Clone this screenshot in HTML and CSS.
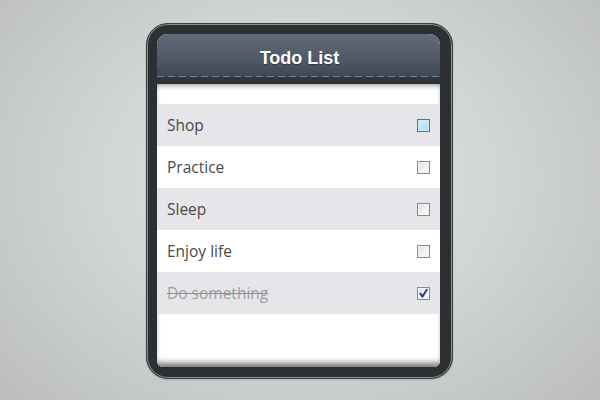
FILE: index.html
```html
<!DOCTYPE html>
<html>
<head>
<meta charset="utf-8">
<link rel="stylesheet" href="styles.css">
</head>
<body>
<div class="device">
  <div class="screen">
    <div class="header"><h1 class="title">Todo List</h1></div>
    <div class="content">
      <ul class="list">
        <li class="item alt"><span class="label">Shop</span><span class="box hover"></span></li>
        <li class="item"><span class="label">Practice</span><span class="box"></span></li>
        <li class="item alt"><span class="label">Sleep</span><span class="box"></span></li>
        <li class="item"><span class="label">Enjoy life</span><span class="box"></span></li>
        <li class="item alt done"><span class="label">Do something</span><span class="box checked"><svg class="tick" viewBox="0 0 11 11" width="11" height="11"><path d="M2.3 5.6 L4.4 8.6 L8.8 1.8" fill="none" stroke="#2b3b86" stroke-width="2" stroke-linecap="round" stroke-linejoin="round"/></svg></span></li>
      </ul>
    </div>
  </div>
</div>
</body>
</html>
```
FILE: styles.css
```css
html, body {
  margin: 0;
  padding: 0;
  height: 100%;
}
body {
  width: 600px;
  height: 400px;
  overflow: hidden;
  background: radial-gradient(ellipse 420px 330px at 50% 45%, #dfe4df 0%, #d3d7d4 45%, #b9bcbb 100%);
  display: flex;
  justify-content: center;
  align-items: flex-start;
}
.device {
  margin-top: 23px;
  margin-left: -1px;
  width: 307px;
  height: 356px;
  box-sizing: border-box;
  padding: 10px 12px 11px 10px;
  background: #2d3033;
  border: 1px solid #3d4043;
  border-radius: 22px;
  box-shadow: inset 0 0 0 1px #8a8e90, inset 0 0 0 2px #2d3033, 0 1px 2px rgba(0,0,0,0.15);
  display: flex;
}
.screen {
  flex: 1;
  display: flex;
  flex-direction: column;
  border-radius: 11px 11px 6px 6px;
  overflow: hidden;
  background: #fff;
}
.header {
  height: 50px;
  flex: none;
  position: relative;
  background: linear-gradient(#636a77 0%, #4f5664 55%, #3f4654 84%, #2f333a 88%, #2c3036 100%);
  display: flex;
  align-items: flex-start;
  justify-content: center;
  padding-left: 2px;
}
.header::after {
  content: "";
  position: absolute;
  left: 0;
  right: 0;
  top: 42px;
  height: 1px;
  background: repeating-linear-gradient(90deg, #71829a 0 7px, transparent 7px 11px);
}
.title {
  margin: 13px 0 0;
  font-family: "Liberation Sans", Arial, sans-serif;
  font-weight: bold;
  font-size: 18px;
  line-height: 22px;
  color: #fff;
  text-shadow: 0 1px 1px rgba(0,0,0,0.35);
}
.content {
  flex: 1;
  padding-top: 20px;
  background: #fff;
  box-shadow: inset 0 5px 5px -3px rgba(0,0,0,0.35), inset 0 -7px 6px -3px rgba(0,0,0,0.55);
}
.list {
  list-style: none;
  margin: 0;
  padding: 0;
}
.item {
  height: 42px;
  display: flex;
  align-items: center;
  justify-content: space-between;
  padding: 0 10px 0 10px;
  background: #fff;
  font-family: "Open Sans", sans-serif;
  font-size: 15.5px;
  color: #4a4a4a;
}
.item.alt {
  background: #e6e5ea;
}
.label {
  margin-top: -1px;
}
.done .label {
  color: #9e9e9e;
  text-decoration: line-through;
  text-decoration-color: #8e8e8e;
}
.box {
  width: 11px;
  height: 11px;
  border: 1px solid #8a8a8a;
  background: linear-gradient(135deg, #dcdcdc, #f4f4f4 60%);
  box-shadow: inset 0 0 0 1px #f2f2f2;
  display: flex;
  align-items: center;
  justify-content: center;
}
.box.hover {
  border-color: #3d7ca6;
  background: linear-gradient(135deg, #d8f1fc, #a8dcf3);
  box-shadow: inset 0 0 0 1px #c9ecfb;
}
.box.checked {
  background: linear-gradient(135deg, #e0e0e0, #f8f8f8 70%);
}
.tick {
  display: block;
}
```
